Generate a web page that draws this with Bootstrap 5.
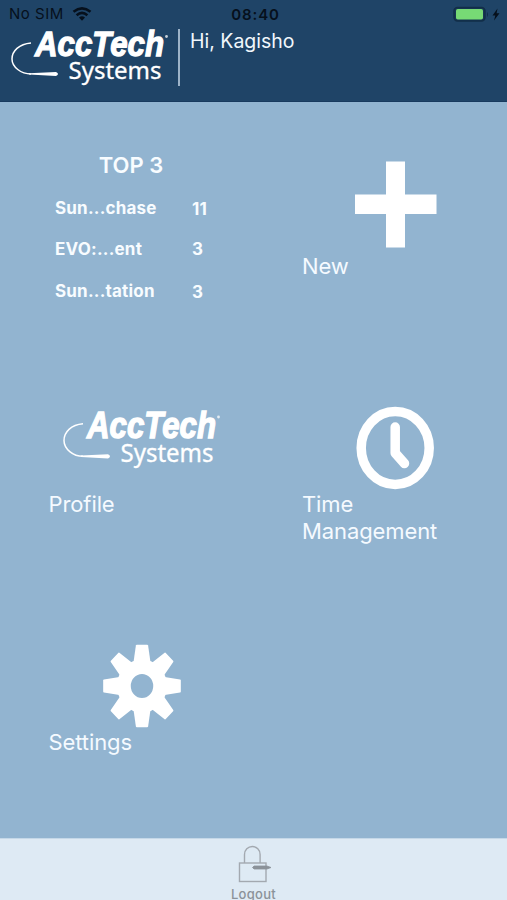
<!DOCTYPE html>
<html lang="en">
<head>
<meta charset="utf-8">
<meta name="viewport" content="width=device-width, initial-scale=1">
<title>AccTech Systems</title>
<link href="https://cdn.jsdelivr.net/npm/bootstrap@5.3.0/dist/css/bootstrap.min.css" rel="stylesheet">
<style>
body{font-family:Inter,"Liberation Sans",sans-serif;background:#92b4d0}
.screen{height:900px}
.app-head{height:102px;background:#1f4467;border-bottom:1px solid #183a5e}
.status{height:28px;color:#06101c;font-size:15px;line-height:30px;padding:0 6px 0 9px}
.status .side{width:200px}
.nosim{letter-spacing:.5px}
.clock{font-weight:600;letter-spacing:.9px;padding-left:1px}
.brand-row{padding-left:10px}
.divider{width:2px;height:57px;background:#9db3c8;margin-left:8px;margin-top:1px}
.hello{font-size:19.5px;line-height:26px;color:#f1f7fc;margin-left:10px}
.tiles{padding:38px 0 0;min-height:0}
.tile{height:238px;padding-left:48.5px}
.tile-body{width:187px}
.pic{height:112.5px}
.logo-pic{padding:29.5px 0 0 13.5px}
.caption-text{font-size:22px;line-height:27px;letter-spacing:-.1px;color:#f5faff}
.top3{padding-top:11.5px;color:#f8fcff;font-weight:600}
.top3-title{font-size:22px;line-height:27px;width:165px}
.top3-line{height:41.5px;font-size:17px;line-height:26px;letter-spacing:.2px;padding-left:6.5px;font-weight:700}
.top3-name{width:137px}
.top3-num{padding-top:1.5px}
.app-foot{height:62px;background:#deeaf4;border-top:1px solid #c5d8e8;color:#8b9299;font-size:13px;font-weight:500;line-height:18px;letter-spacing:.3px}
svg{display:block;flex:none}
</style>
<script src="https://cdn.jsdelivr.net/npm/bootstrap@5.3.0/dist/js/bootstrap.bundle.min.js"></script>
</head>
<body>
<svg width="0" height="0" class="position-absolute" aria-hidden="true">
  <symbol id="logo" viewBox="0 0 160 60" preserveAspectRatio="none">
    <path d="M21 15C9 16 2 23 2 31C2 39 11 46 21 46" fill="none" stroke="#fff" stroke-width="1.5"/>
    <path d="M19 45.2L46 44Q50 46 46 48L19 46.6Z" fill="#fff"/>
    <g fill="#fff">
      <text x="25" y="28.300" font-family="Liberation Sans, Arial, sans-serif" font-size="34.500" font-weight="700" font-style="italic" stroke="#fff" stroke-width="1.300" textLength="129" lengthAdjust="spacingAndGlyphs">AccTech</text>
      <text x="58.500" y="51" font-family="Noto Sans, sans-serif" font-size="23.500" stroke="#fff" stroke-width=".3" textLength="93" lengthAdjust="spacingAndGlyphs">Systems</text>
      <circle cx="156.500" cy="8.500" r="1.400" opacity=".75"/>
    </g>
  </symbol>
</svg>
<div class="screen d-flex flex-column overflow-hidden">
  <header class="app-head flex-shrink-0">
    <div class="status d-flex justify-content-between">
      <div class="side d-flex align-items-center"><span class="nosim">No SIM</span>
        <svg class="ms-2" width="20" height="14" viewBox="0 0 20 14"><g fill="none" stroke="#06101c" stroke-width="2.600"><path d="M1.500 4.800Q10-2 18.500 4.800"/><path d="M4.600 8.200Q10 3.600 15.400 8.200"/></g><path d="M7 10.500Q10 8 13 10.500L10 13.800Z" fill="#06101c"/></svg>
      </div>
      <span class="clock">08:40</span>
      <div class="side d-flex align-items-center justify-content-end">
        <svg width="48" height="16" viewBox="0 0 48 16"><rect x="1" y="1.500" width="31" height="13.500" rx="3.500" fill="#173754" stroke="#122e48" stroke-width="1.400"/><rect x="3" y="3" width="27" height="10.500" rx="1.800" fill="#77da75"/><path d="M34 6Q36 8.500 34 11Z" fill="#122e48"/><path d="M44.500 2.500L39.500 9.500H42.300L41 14.500L46.500 7.300H43.600Z" fill="#06101c"/></svg>
      </div>
    </div>
    <div class="brand-row d-flex align-items-start">
      <svg width="160" height="60"><use href="#logo"/></svg>
      <div class="divider"></div>
      <div class="hello">Hi, Kagisho</div>
    </div>
  </header>

  <main class="tiles flex-grow-1 overflow-hidden">
    <div class="row g-0">
      <section class="col-6 tile">
        <div class="tile-body top3">
          <div class="top3-title text-center">TOP 3</div>
          <div class="pt-3">
            <div class="top3-line d-flex"><span class="top3-name">Sun...chase</span><span class="top3-num">11</span></div>
            <div class="top3-line d-flex"><span class="top3-name">EVO:...ent</span><span>3</span></div>
            <div class="top3-line d-flex"><span class="top3-name">Sun...tation</span><span class="top3-num">3</span></div>
          </div>
        </div>
      </section>
      <section class="col-6 tile">
        <div class="tile-body">
          <div class="pic d-flex justify-content-center"><svg width="90" height="112" viewBox="0 0 90 112"><path d="M35 21.500H54V54.500H85.500V74H54V107.500H35V74H4V54.500H35Z" fill="#fff"/></svg></div>
          <div class="caption-text">New</div>
        </div>
      </section>
      <section class="col-6 tile">
        <div class="tile-body">
          <div class="pic logo-pic"><svg width="160" height="63"><use href="#logo"/></svg></div>
          <div class="caption-text">Profile</div>
        </div>
      </section>
      <section class="col-6 tile">
        <div class="tile-body">
          <div class="pic d-flex justify-content-center"><svg width="90" height="112" viewBox="0 0 90 112"><g fill="none" stroke="#fff" stroke-linecap="round" stroke-linejoin="round" stroke-width="9.500"><ellipse cx="44.200" cy="70" rx="34" ry="36.500"/><path d="M44.200 49V75L53.500 85.500"/></g></svg></div>
          <div class="caption-text">Time Management</div>
        </div>
      </section>
      <section class="col-6 tile">
        <div class="tile-body">
          <div class="pic d-flex justify-content-center"><svg width="90" height="112" viewBox="0 0 90 112"><g transform="translate(45 70) scale(.94 1)" fill="#fff">
            <path id="tooth" d="M-9-24L-6.500-40.500Q-6.300-41.300-5.500-41.300H5.500Q6.300-41.300 6.500-40.500L9-24Z"/>
            <use href="#tooth" transform="rotate(45)"/><use href="#tooth" transform="rotate(90)"/><use href="#tooth" transform="rotate(135)"/><use href="#tooth" transform="rotate(180)"/><use href="#tooth" transform="rotate(225)"/><use href="#tooth" transform="rotate(270)"/><use href="#tooth" transform="rotate(315)"/>
            <circle r="19.200" fill="none" stroke="#fff" stroke-width="14.500"/></g></svg></div>
          <div class="caption-text">Settings</div>
        </div>
      </section>
    </div>
  </main>

  <footer class="app-foot flex-shrink-0 d-flex flex-column align-items-center">
    <svg width="36" height="46" viewBox="0 0 36 46"><g fill="none" stroke="#a3a9b0" stroke-width="1.400"><path d="M8.500 24V15.500A7.800 8 0 0 1 24.100 15.500V24"/><rect x="3.500" y="24" width="26.500" height="18.500"/></g><path d="M16.500 28.500L18 27H31L35 28.500L31 30H18Z" fill="#8b9299" stroke="#8b9299" stroke-width=".8"/></svg>
    <span>Logout</span>
  </footer>
</div>
</body>
</html>
